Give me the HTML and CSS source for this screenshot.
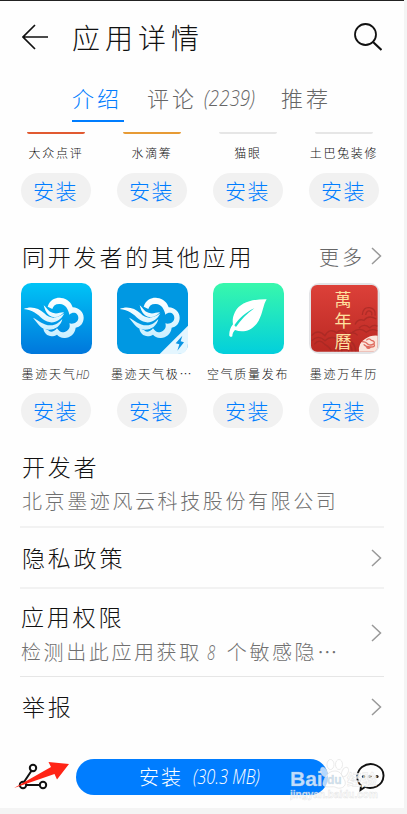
FILE: index.html
```html
<!DOCTYPE html>
<html lang="zh-CN">
<head>
<meta charset="utf-8">
<title>应用详情</title>
<link rel="stylesheet" href="styles.css">
</head>
<body>
<svg class="defs" aria-hidden="true">
  <defs>
    <linearGradient id="sky" x1="0" y1="0" x2="0" y2="1"><stop offset="0" stop-color="#00c4f6"/><stop offset="1" stop-color="#0077dc"/></linearGradient>
    <linearGradient id="mint" x1="0" y1="0" x2="0" y2="1"><stop offset="0" stop-color="#38f8ac"/><stop offset="1" stop-color="#02cfdc"/></linearGradient>
    <linearGradient id="red" x1="0" y1="0" x2="0" y2="1"><stop offset="0" stop-color="#dc4039"/><stop offset="1" stop-color="#bb2923"/></linearGradient>
    <linearGradient id="mist" x1="0" y1="0" x2="0" y2="1"><stop offset="0" stop-color="#fff"/><stop offset="1" stop-color="#c9efff"/></linearGradient>
    <symbol id="cloud" viewBox="0 0 213 213">
      <path fill="url(#mist)" d="M8 78C30 68 54 75 70 91C87 108 105 109 130 91C117 119 88 126 66 109C49 93 35 80 8 78ZM36 104C53 111 65 127 89 127C105 127 114 119 124 108C119 132 97 144 74 139C57 135 49 119 36 104ZM68 67C78 75 83 89 101 91C112 92 120 87 129 88C117 103 98 107 84 97C74 89 71 77 68 67Z"/>
      <path fill="url(#mist)" d="M80 71C88 47 109 43 120 45C139 46 151 60 155 73C174 74 188 88 188 104C188 121 177 132 164 134C162 153 147 164 132 165C121 166 113 160 108 155C89 166 69 156 67 136L82 142C86 149 100 147 108 136C117 147 121 150 133 146C146 141 148 131 145 121C159 125 172 116 172 105C172 91 158 84 145 95C142 78 133 64 117 63C104 62 97 68 94 78Z"/>
    </symbol>
    <symbol id="chevron" viewBox="0 0 12 20"><path d="M2 2l8.500 8-8.500 8" fill="none" stroke="#999" stroke-width="1.500"/></symbol>
  </defs>
</svg>
<main class="screen">
  <header class="header">
    <svg class="back" viewBox="0 0 26 26"><path d="M13 1L1 13l12 12M1 13h25" fill="none" stroke="#111" stroke-width="1.700"/></svg>
    <h1>应用详情</h1>
    <svg class="search" viewBox="0 0 28 28"><circle cx="11.500" cy="11.500" r="10.500" fill="none" stroke="#111" stroke-width="1.800"/><path d="M18.500 18.500l9 8.500" stroke="#111" stroke-width="2.200"/></svg>
  </header>
  <nav class="tabs">
    <span class="tab active">介绍</span>
    <span class="tab reviews">评论<i class="count">(2239)</i></span>
    <span class="tab">推荐</span>
  </nav>
  <section class="apps">
    <article class="app"><span class="sliver orange"></span><span class="name">大众点评</span><button>安装</button></article>
    <article class="app"><span class="sliver gold"></span><span class="name">水滴筹</span><button>安装</button></article>
    <article class="app"><span class="sliver"></span><span class="name">猫眼</span><button>安装</button></article>
    <article class="app"><span class="sliver"></span><span class="name">土巴兔装修</span><button>安装</button></article>
  </section>
  <div class="section-head">
    <h2>同开发者的其他应用</h2>
    <span class="more">更多</span>
    <svg class="chev"><use href="#chevron"/></svg>
  </div>
  <section class="apps others">
    <article class="app">
      <svg class="icon" viewBox="0 0 213 213"><rect width="213" height="213" rx="31" fill="url(#sky)"/><use href="#cloud"/></svg>
      <span class="name">墨迹天气<i class="hd">HD</i></span><button>安装</button>
    </article>
    <article class="app">
      <svg class="icon" viewBox="0 0 213 213"><rect width="213" height="213" rx="31" fill="#0098e2"/><use href="#cloud"/><path d="M213 128v54q0 31-31 31h-54z" fill="#e4f6ff"/><path d="M196 158l-20 23 11 3-6 19 20-25-10-3z" fill="#0a95e4"/></svg>
      <span class="name">墨迹天气极…</span><button>安装</button>
    </article>
    <article class="app">
      <svg class="icon" viewBox="0 0 213 213"><rect width="213" height="213" rx="31" fill="url(#mint)"/><path d="M161 49C120 48 82 57 66 87C57 105 59 119 60 124C52 134 48 146 49 158Q53 164 58 160C58 151 62 145 66 141C92 151 120 142 137 113C150 89 150 66 161 49Z" fill="#fff"/><path d="M64 127C78 107 97 88 124 76C101 92 83 112 69 132Z" fill="#18dec8"/></svg>
      <span class="name">空气质量发布</span><button>安装</button>
    </article>
    <article class="app">
      <div class="icon almanac">
      <svg class="icon" viewBox="0 0 213 213">
        <rect width="213" height="213" rx="31" fill="#e2e3e6"/><rect x="6" y="6" width="200" height="200" rx="18" fill="url(#red)"/>
        <g fill="none" stroke="#9f2823" stroke-width="4" opacity=".65">
          <path d="M8 158q18-22 40 0q12-24 35-9q17-16 33 7q16-14 30 1M8 173q20-20 40 0q22-20 44 3M16 184q15-19 31 0q16 9 20 20M78 205q0-34 30-34t32 34M88 205q0-23 20-23t21 23M98 205q0-13 10-13t11 13M160 96q2-25 22-22q20 4 16 24M170 96q2-14 12-12q9 2 6 13M138 124q10-19 27-12q13-18 37-4M150 135q15-15 32-1q13-11 23-4M130 148q23-18 42 0q15-14 33-4"/>
        </g>
        <path d="M150 206q-3-26 18-38q17-12 38-10v30q0 18-18 18z" fill="#fbe5dc"/>
        <path d="M159 176q12 0 18 8 10 5 17-2M164 184q8 9 22 8q14 0 9-9 4-9-8-11-7-9-15 0M172 192q6 8 13 0" fill="none" stroke="#df6b5f" stroke-width="4"/>
      </svg>
      <div class="calendar"><span>萬</span><span>年</span><span>曆</span></div>
      </div>
      <span class="name">墨迹万年历</span><button>安装</button>
    </article>
  </section>
  <section class="developer"><h2>开发者</h2><p>北京墨迹风云科技股份有限公司</p></section>
  <section class="row privacy"><h2>隐私政策</h2><svg class="chev"><use href="#chevron"/></svg></section>
  <section class="row permission"><div><h2>应用权限</h2><p>检测出此应用获取<i class="eight">8</i>个敏感隐…</p></div><svg class="chev"><use href="#chevron"/></svg></section>
  <section class="row report"><h2>举报</h2><svg class="chev"><use href="#chevron"/></svg></section>
  <footer class="footer">
    <svg class="share" viewBox="0 0 56 30"><g fill="none" stroke="#111" stroke-width="2"><path d="M10 20L18 8M12 23h14"/><circle cx="19" cy="6" r="3.200"/><circle cx="9" cy="23" r="3.200"/><circle cx="29" cy="23" r="3.200"/></g><path d="M0 26L37 5 34.500 0 55 2 43 17.500 40.500 12Z" fill="#ff2416"/></svg>
    <div class="install">安装<i class="size">(30.3 MB)</i></div>
    <svg class="chat" viewBox="0 0 29 29"><path d="M5 22.500C-1 17 1 8 6 4C16-3 28 4 27.500 13C27 23 16 27 9 24L4.500 27Z" fill="none" stroke="#111" stroke-width="1.900"/><g fill="#222"><circle cx="7.500" cy="13.500" r="1.600"/><circle cx="14" cy="13.500" r="1.600"/><circle cx="21" cy="13.500" r="1.600"/></g></svg>
    <div class="watermark">
      <svg viewBox="0 0 92 46">
        <g class="paw"><ellipse cx="34" cy="14" rx="3" ry="5" transform="rotate(-25 34 14)"/><ellipse cx="40.500" cy="6.500" rx="3.500" ry="5"/><ellipse cx="49" cy="6.500" rx="3.500" ry="5"/><ellipse cx="55" cy="14" rx="3" ry="5" transform="rotate(25 55 14)"/><path d="M45 13C37 13 34 21 33 25C32 31 42 28 45 29C50 32 57 29 55 23C52 18 51 13 45 13Z"/></g>
        <text class="bai" x="0" y="28">Bai</text><text class="du" x="37" y="26">du</text><text class="jingyan" x="57" y="27">经验</text><text class="url" x="0" y="40">jingyan.baidu.com</text>
      </svg>
    </div>
  </footer>
</main>
</body>
</html>
```
FILE: styles.css
```css
* { box-sizing: border-box; }
body { margin: 0; height: 814px; overflow: hidden; background: #f4f4f4; color: #111; font-family: "Noto Sans CJK SC", sans-serif; font-weight: 300; }
h1, h2, p { margin: 0; font-weight: 300; white-space: nowrap; }
svg { display: block; flex: none; }
i { display: inline-block; transform: scaleX(.75); transform-origin: left; font-family: "Open Sans", sans-serif; font-style: italic; font-weight: 300; letter-spacing: 0; white-space: nowrap; }
.defs { position: absolute; width: 0; height: 0; }
.screen { width: 404px; height: 808px; overflow: hidden; background: #fefefe; border-top: 1px solid #222; }
.header { display: flex; align-items: center; height: 71px; padding: 0 22px; }
.back { width: 26px; height: 26px; }
h1 { margin-left: 24px; font-size: 28px; letter-spacing: 5px; line-height: 40px; }
.search { width: 28px; height: 28px; margin-left: auto; }
.tabs { display: flex; align-items: flex-start; height: 60px; padding: 9px 0 0 72px; color: #666; font-size: 22px; line-height: 32px; letter-spacing: 3px; white-space: nowrap; }
.tab { height: 41px; width: 52px; }
.tab.active { color: #007dff; border-bottom: 2px solid #007dff; }
.tab.reviews { display: flex; width: 134px; margin-left: 23px; }
.count { width: 54px; margin-left: 7px; font-size: 22px; transform: scaleX(.85); }
.apps { display: grid; grid-template-columns: repeat(4, 96px); padding-left: 8px; }
.app { display: flex; flex-direction: column; align-items: center; }
.sliver { width: 58px; height: 2px; border-radius: 0 0 2px 2px; background: #e6e6e6; }
.orange { background: #e15a31; }
.gold { background: #e79b35; }
.name { height: 19px; margin-top: 9px; font-size: 12px; letter-spacing: 1.700px; line-height: 19px; white-space: nowrap; }
button { width: 70px; height: 35px; margin: 11px 0 0; padding: 0 1px 1px 0; border: 0; border-radius: 18px; background: #f1f1f1; color: #007dff; font: 300 21px/34px "Noto Sans CJK SC", sans-serif; letter-spacing: 1.500px; }
.section-head { display: flex; align-items: center; height: 75px; padding: 22px 22px 1px; }
h2 { font-size: 23px; letter-spacing: 2.800px; line-height: 34px; }
.more { margin-left: auto; color: #666; font-size: 20px; letter-spacing: 3px; }
.chev { width: 12px; height: 20px; margin-left: 5px; }
.icon { width: 71px; height: 71px; }
.others .name { margin-top: 10px; }
.others button { margin-top: 10px; }
.hd { width: 14px; font-size: 13px; line-height: 18px; }
.almanac { display: grid; }
.almanac > * { grid-area: 1 / 1; }
.calendar { display: flex; flex-direction: column; align-items: center; padding: 5px 2px 0 0; color: #ffe1a0; font: 400 17px/21px "Noto Sans CJK TC", sans-serif; }
.calendar span { height: 21px; }
.developer { height: 100px; margin: 0 20px; padding: 21px 2px 0; border-bottom: 2px solid #f2f2f2; }
p { color: #707070; font-size: 20px; letter-spacing: 2.600px; line-height: 34px; }
.developer p { padding-top: 1px; }
.row { display: flex; align-items: center; margin: 0 20px; padding: 0 2px; border-bottom: 2px solid #f2f2f2; }
.row .chev { margin-left: auto; }
.row h2 { position: relative; top: -1px; }
.privacy { height: 61px; }
.permission { height: 88px; border-bottom: 1px solid #e6e6e6; }
.permission > div { margin-left: -1px; padding-top: 2px; }
.permission p { position: relative; top: 1px; }
.eight { width: 11px; margin: 0 9px 0 5px; line-height: 24px; }
.report { height: 60px; border: 0; }
.footer { position: relative; display: flex; height: 71px; padding: 22px 0 0 14px; align-items: flex-start; }
.share { width: 56px; height: 30px; margin-top: 3px; }
.install { display: flex; width: 252px; height: 36px; margin-left: 6px; padding-left: 63px; border-radius: 18px; background: #007dff; color: #fff; font-size: 20px; letter-spacing: 2px; line-height: 35px; white-space: nowrap; }
.size { margin-left: 10px; transform: scaleX(.82); }
.chat { width: 29px; height: 29px; margin: 4px 0 0 28px; }
.watermark { position: absolute; left: 290px; top: 21px; width: 92px; height: 46px; }
.paw { fill: #fff; fill-opacity: .7; stroke: #ddd; stroke-opacity: .6; stroke-width: 1; }
.watermark text { font-family: "Liberation Sans", "Noto Sans CJK SC", sans-serif; font-weight: 700; fill: #fff; fill-opacity: .75; stroke: #ccc; stroke-opacity: .5; stroke-width: .5; }
.watermark .bai { font-size: 21px; }
.watermark .du { font-size: 12px; fill: #bcd9ee; }
.watermark .jingyan { font-size: 15px; }
.watermark .url { font-size: 10px; }
```
